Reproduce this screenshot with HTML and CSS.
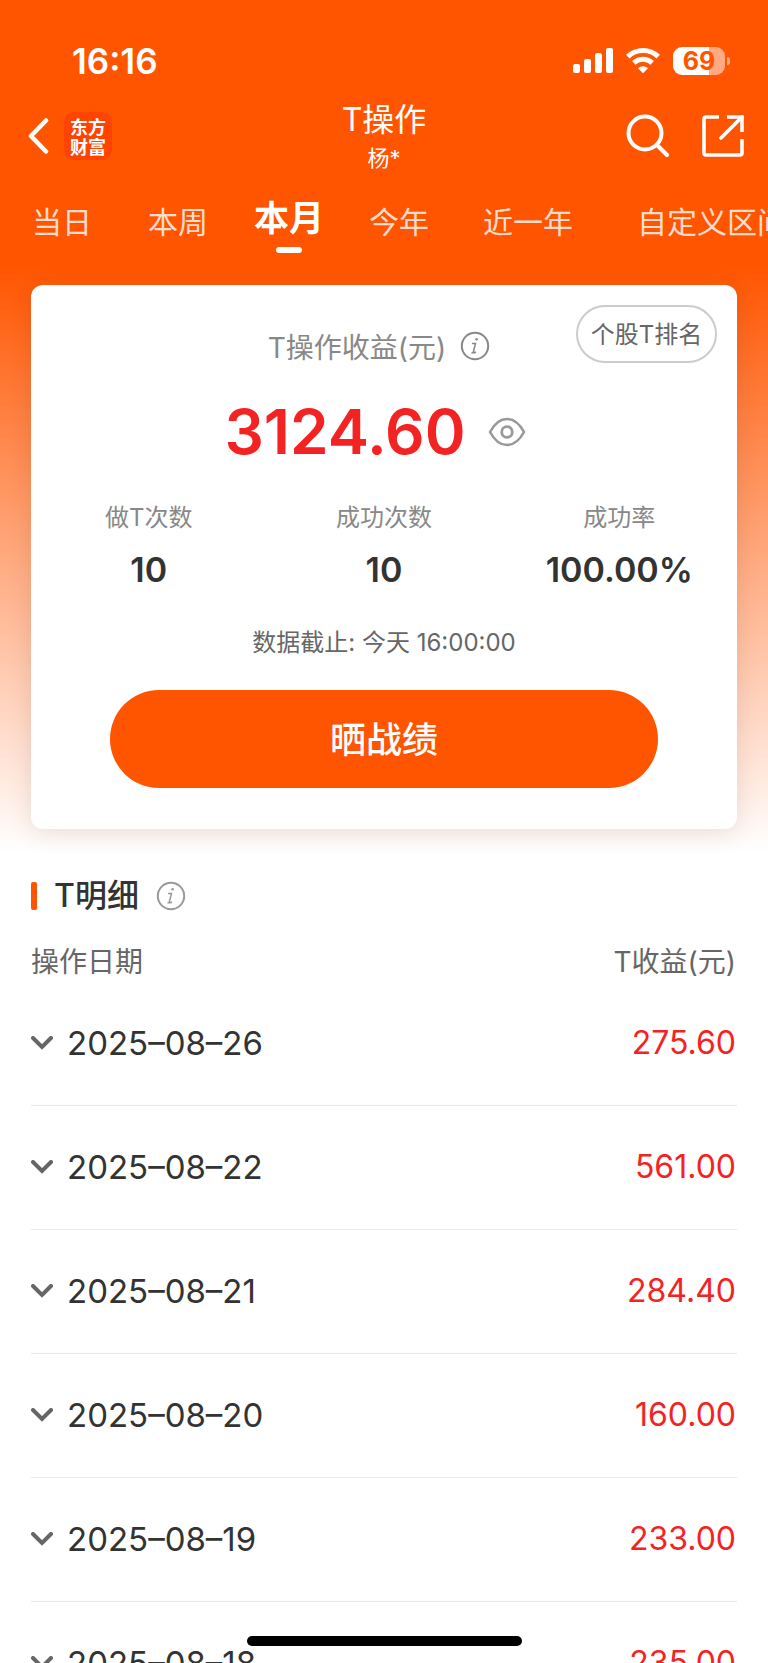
FILE: index.html
```html
<!DOCTYPE html>
<html lang="zh-CN">
<head>
<meta charset="utf-8">
<meta name="viewport" content="width=device-width, initial-scale=1">
<title>T操作</title>
<link rel="stylesheet" href="styles.css">
</head>
<body>
<div class="app">
  <div class="hero">
    <div class="status">
      <span class="status-time">16:16</span>
      <div class="status-icons">
        <svg width="40" height="26" viewBox="0 0 40 26" fill="#fff" aria-hidden="true">
          <rect x="0" y="16" width="7" height="9" rx="2"/><rect x="11" y="11" width="7" height="14" rx="2"/><rect x="22" y="5" width="7" height="20" rx="2"/><rect x="33" y="0" width="7" height="25" rx="2"/>
        </svg>
        <svg width="34" height="26" viewBox="0 0 34 26" fill="none" stroke="#fff" stroke-width="5" aria-hidden="true">
          <path d="M1.8 8.6a22 22 0 0 1 30.4 0"/><path d="M7.8 14.9a13.4 13.4 0 0 1 18.4 0"/><path d="M17 25.2l-5-5a7.5 7.5 0 0 1 10 0z" fill="#fff" stroke="none"/>
        </svg>
        <span class="battery"><span class="battery-body">69</span><span class="battery-tip"></span></span>
      </div>
    </div>
    <header class="nav">
      <div class="nav-left">
        <button class="icon-button" type="button" aria-label="返回">
          <svg width="22" height="36" viewBox="0 0 22 36" fill="none" stroke="#fff" stroke-width="4.500" stroke-linecap="round" stroke-linejoin="round"><path d="M19 2.500L4 18l15 15.500"/></svg>
        </button>
        <a class="logo" href="#"><span>东方</span><span>财富</span></a>
      </div>
      <div class="nav-title">
        <h1>T操作</h1>
        <p>杨*</p>
      </div>
      <div class="nav-right">
        <button class="icon-button" type="button" aria-label="搜索">
          <svg width="44" height="44" viewBox="0 0 44 44" fill="none" stroke="#fff" stroke-width="4" stroke-linecap="round"><circle cx="19" cy="19" r="16.500"/><path d="M31 31l10 10"/></svg>
        </button>
        <button class="icon-button" type="button" aria-label="分享">
          <svg width="42" height="42" viewBox="0 0 42 42" fill="none" stroke="#fff" stroke-width="3.600"><path d="M17 2H4Q2 2 2 4v34q0 2 2 2h34q2 0 2-2V24"/><path d="M25 2h15v15"/><path d="M19 23L40 2" stroke-linecap="round"/></svg>
        </button>
      </div>
    </header>
    <nav class="tabs">
      <a href="#">当日</a>
      <a href="#">本周</a>
      <a href="#" class="active" aria-current="page">本月</a>
      <a href="#">今年</a>
      <a href="#">近一年</a>
      <a href="#">自定义区间</a>
    </nav>
    <section class="card">
      <div class="card-head">
        <div class="profit-label">
          <span>T操作收益(元)</span>
          <button class="icon-button" type="button" aria-label="收益说明">
            <svg width="30" height="30" viewBox="0 0 30 30" fill="none" stroke="#888" stroke-width="2"><circle cx="15" cy="15" r="13.200"/><path d="M12 12.500h3.500l-2.200 8.500q-.2 1.200 2.700 0M11.500 21.800h4" stroke-width="1.500"/><circle cx="16.600" cy="8.300" r="1.300" fill="#888" stroke="none"/></svg>
          </button>
        </div>
        <button class="rank-button" type="button">个股T排名</button>
      </div>
      <div class="profit">
        <strong>3124.60</strong>
        <button class="icon-button" type="button" aria-label="隐藏金额">
          <svg width="38" height="30" viewBox="0 0 38 30" fill="none" stroke="#999" stroke-width="2.600"><path d="M2 15Q9 2 19 2T36 15Q29 28 19 28T2 15z" stroke-linejoin="round"/><circle cx="19" cy="15" r="5.300" stroke-width="2.800"/></svg>
        </button>
      </div>
      <dl class="stats">
        <div><dt>做T次数</dt><dd>10</dd></div>
        <div><dt>成功次数</dt><dd>10</dd></div>
        <div><dt>成功率</dt><dd>100.00%</dd></div>
      </dl>
      <p class="deadline">数据截止: 今天 16:00:00</p>
      <button class="share-button" type="button">晒战绩</button>
    </section>
  </div>
  <main class="details">
    <div class="details-title">
      <h2>T明细</h2>
      <button class="icon-button" type="button" aria-label="明细说明">
        <svg width="30" height="30" viewBox="0 0 30 30" fill="none" stroke="#999" stroke-width="2"><circle cx="15" cy="15" r="13.200"/><path d="M12 12.500h3.500l-2.200 8.500q-.2 1.200 2.700 0M11.500 21.800h4" stroke-width="1.500"/><circle cx="16.600" cy="8.300" r="1.300" fill="#999" stroke="none"/></svg>
      </button>
    </div>
    <table class="records">
      <thead><tr><th scope="col">操作日期</th><th scope="col">T收益(元)</th></tr></thead>
      <tbody>
        <tr><td><button class="date" type="button"><svg width="22" height="14" viewBox="0 0 22 14"><path d="M2 2l9 9 9-9"/></svg>2025–08–26</button></td><td>275.60</td></tr>
        <tr><td><button class="date" type="button"><svg width="22" height="14" viewBox="0 0 22 14"><path d="M2 2l9 9 9-9"/></svg>2025–08–22</button></td><td>561.00</td></tr>
        <tr><td><button class="date" type="button"><svg width="22" height="14" viewBox="0 0 22 14"><path d="M2 2l9 9 9-9"/></svg>2025–08–21</button></td><td>284.40</td></tr>
        <tr><td><button class="date" type="button"><svg width="22" height="14" viewBox="0 0 22 14"><path d="M2 2l9 9 9-9"/></svg>2025–08–20</button></td><td>160.00</td></tr>
        <tr><td><button class="date" type="button"><svg width="22" height="14" viewBox="0 0 22 14"><path d="M2 2l9 9 9-9"/></svg>2025–08–19</button></td><td>233.00</td></tr>
        <tr><td><button class="date" type="button"><svg width="22" height="14" viewBox="0 0 22 14"><path d="M2 2l9 9 9-9"/></svg>2025–08–18</button></td><td>235.00</td></tr>
      </tbody>
    </table>
  </main>
  <div class="home-indicator"></div>
</div>
</body>
</html>
```
FILE: styles.css
```css
* {
  box-sizing: border-box;
}

body,
h1,
h2,
p,
dl,
dd {
  margin: 0;
}

body {
  background: #fff;
  color: #333;
  font-family: Inter, "Noto Sans CJK SC", sans-serif;
}

button {
  padding: 0;
  border: 0;
  background: none;
  color: inherit;
  font: inherit;
  cursor: pointer;
}

a {
  color: inherit;
  text-decoration: none;
}

svg {
  display: block;
}

.app {
  height: 100vh;
  overflow: hidden;
}

.hero {
  padding-bottom: 24px;
  background: linear-gradient(#ff5500 264px, #fff 100%);
}

.status {
  display: flex;
  align-items: center;
  justify-content: space-between;
  height: 96px;
  padding: 26px 38px 0 72px;
  color: #fff;
}

.status-time {
  font-weight: 600;
  font-size: 35px;
  line-height: 40px;
}

.status-icons {
  display: flex;
  align-items: center;
  gap: 13px;
}

.battery {
  display: flex;
  align-items: center;
  gap: 2px;
}

.battery-body {
  width: 52px;
  border-radius: 9px;
  background: linear-gradient(90deg, #fff 69%, #ffaa80 69%);
  color: #ff5500;
  font-weight: 700;
  font-size: 25px;
  line-height: 28px;
  text-align: center;
}

.battery-tip {
  width: 3px;
  height: 8px;
  border-radius: 0 3px 3px 0;
  background: #ffaa80;
}

.nav {
  display: grid;
  grid-template-columns: 1fr auto 1fr;
  align-items: center;
  height: 80px;
  padding: 0 24px;
  color: #fff;
}

.nav-left,
.nav-right {
  display: flex;
  align-items: center;
}

.nav-left {
  gap: 15px;
  padding-left: 3px;
}

.nav-right {
  justify-content: flex-end;
  gap: 32px;
}

.logo {
  display: grid;
  place-content: center;
  width: 48px;
  height: 48px;
  border-radius: 10px;
  background: #ff4400;
  font: 700 18px/20px "Noto Sans CJK SC", sans-serif;
}

.nav-title {
  text-align: center;
}

.nav-title h1 {
  font-weight: 400;
  font-size: 32px;
  line-height: 44px;
}

.nav-title p {
  font-size: 22px;
  line-height: 32px;
}

.tabs {
  display: grid;
  grid-template-columns: 124px 108px 114px 106px 152px 216px;
  height: 109px;
  overflow: hidden;
  color: #ffddcc;
  font-size: 30px;
  line-height: 92px;
  text-align: center;
  white-space: nowrap;
}

.tabs .active {
  color: #fff;
  font-weight: 600;
  font-size: 35px;
  line-height: 84px;
}

.tabs .active::after {
  content: "";
  display: block;
  width: 26px;
  height: 6px;
  margin: -13px auto 0;
  border-radius: 3px;
  background: #fff;
}

.card {
  margin: 0 31px;
  padding: 20px 0 41px;
  border-radius: 12px;
  background: #fff;
  box-shadow: 0 4px 24px rgba(80, 30, 10, 0.12);
}

.card-head {
  display: grid;
  grid-template-columns: 1fr auto 1fr;
  height: 82px;
  padding: 0 20px;
}

.profit-label {
  display: flex;
  grid-column: 2;
  align-items: center;
  gap: 14px;
  padding-right: 10px;
  color: #888;
  font-size: 28px;
}

.rank-button {
  justify-self: end;
  width: 141px;
  height: 58px;
  padding-bottom: 3px;
  border: 2px solid #ccc;
  border-radius: 29px;
  color: #666;
  font-size: 24px;
  white-space: nowrap;
}

.profit {
  display: flex;
  align-items: center;
  justify-content: center;
  gap: 22px;
  height: 90px;
  padding-right: 18px;
}

.profit strong {
  color: #f42323;
  font-weight: 600;
  font-size: 62px;
  line-height: 80px;
}

.stats {
  display: grid;
  grid-template-columns: repeat(3, 1fr);
  margin-top: 21px;
  text-align: center;
}

.stats dt {
  color: #888;
  font-size: 24px;
  line-height: 40px;
}

.stats dd {
  margin-top: 8px;
  font-weight: 600;
  font-size: 34px;
  line-height: 48px;
}

.deadline {
  margin-top: 29px;
  color: #666;
  font-size: 24px;
  line-height: 40px;
  text-align: center;
}

.share-button {
  display: block;
  width: calc(100% - 158px);
  height: 98px;
  margin: 27px auto 0;
  padding-bottom: 4px;
  border-radius: 49px;
  background: #ff5500;
  color: #fff;
  font-weight: 500;
  font-size: 36px;
}

.details {
  padding: 19px 31px 0;
}

.details-title {
  display: flex;
  align-items: center;
  gap: 17px;
  height: 48px;
}

.details-title::before {
  content: "";
  width: 6px;
  height: 28px;
  border-radius: 2px;
  background: #ff5500;
}

.details-title h2 {
  font-weight: 500;
  font-size: 32px;
  line-height: 48px;
}

.records {
  width: 100%;
  border-collapse: collapse;
}

.records th {
  height: 61px;
  padding: 22px 0 0;
  color: #666;
  font-weight: 400;
  font-size: 28px;
  line-height: 38px;
  text-align: left;
}

.records td {
  height: 124px;
  padding: 0;
  border-bottom: 1px solid #e8e8e8;
  font-size: 32px;
  line-height: 40px;
}

.records th:last-child,
.records td:last-child {
  padding-right: 1px;
  text-align: right;
}

.records td:last-child {
  color: #f42323;
}

.date {
  display: flex;
  align-items: center;
  gap: 14px;
  font-size: 33px;
}

.date path {
  fill: none;
  stroke: #666;
  stroke-width: 4;
  stroke-linecap: round;
}

.home-indicator {
  position: fixed;
  bottom: 17px;
  left: 50%;
  width: 275px;
  height: 10px;
  margin-left: -137px;
  border-radius: 5px;
  background: #000;
}
```
